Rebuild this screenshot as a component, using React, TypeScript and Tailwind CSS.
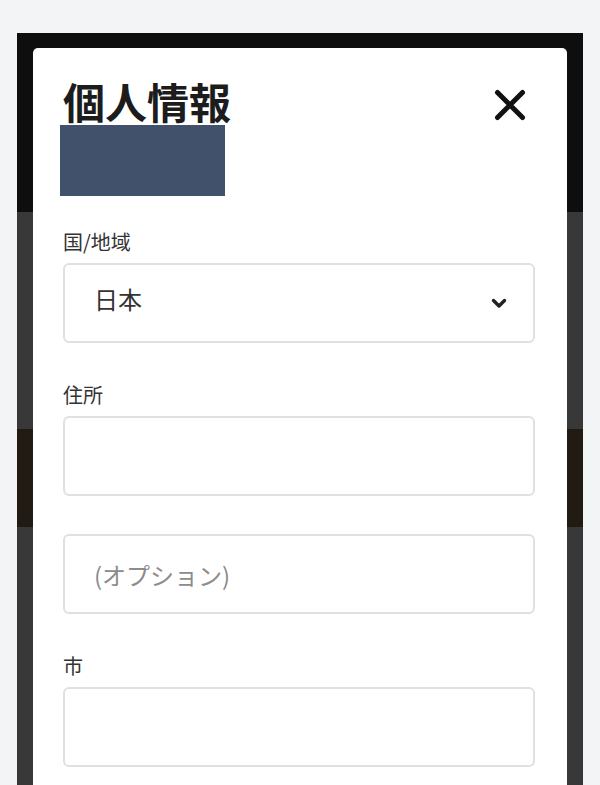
// 個人情報モーダル - 背景ページの上に重なるフォーム

function ChevronDown() {
  return (
    <svg width="16" height="11" viewBox="0 0 16 11" fill="none" aria-hidden="true">
      <path d="M2.5 2.5l5.5 5.5 5.5-5.5" stroke="#222" strokeWidth="3.4" strokeLinecap="round" strokeLinejoin="round" />
    </svg>
  );
}

function CloseIcon() {
  return (
    <svg width="34" height="34" viewBox="0 0 34 34" fill="none" aria-hidden="true">
      <path d="M4.5 4.5l25 25M29.5 4.5l-25 25" stroke="#111" strokeWidth="5" strokeLinecap="round" />
    </svg>
  );
}

function Field({ label, children }: { label?: string; children: React.ReactNode }) {
  return (
    <div className="flex flex-col">
      {label && <label className="mb-[7px] text-[20px] leading-[28px] text-[#333]">{label}</label>}
      {children}
    </div>
  );
}

const boxClass =
  'h-[80px] w-full rounded-[6px] border-2 border-[#e0e0e0] bg-white pl-[29px] pr-[26px] text-[24px] text-[#333] outline-none placeholder:text-[#8c8c8c]';

export default function App() {
  return (
    <div className="min-h-screen bg-[#f3f4f6] px-[17px] pt-[33px] font-['Noto_Sans_CJK_JP','Noto_Sans',sans-serif]">
      <div className="relative h-[752px] w-[566px] overflow-hidden">
        {/* 背景ページ（暗いオーバーレイ越し） */}
        <div className="h-[179px] bg-[#0e0e0e]" />
        <div className="h-[217px] bg-[#383838]" />
        <div className="h-[98px] bg-[#221b13]" />
        <div className="h-[258px] bg-[#383838]" />

        {/* モーダル本体 */}
        <div className="absolute top-[15px] right-4 bottom-0 left-4 rounded-t-[5px] bg-white pr-[32px] pl-[30px]">
          <div className="flex items-start justify-between pt-[29px]">
            <div>
              <h2 className="text-[42px] leading-[48px] font-bold text-[#1c1c1c]">個人情報</h2>
              <div className="ml-[-3px] h-[71px] w-[165px] bg-[#42516b]" />
            </div>
            <button className="mt-[11px] mr-[8px] flex items-center justify-center" aria-label="閉じる">
              <CloseIcon />
            </button>
          </div>

          <div className="mt-[32px] flex flex-col gap-[38px]">
            <Field label="国/地域">
              <div className={boxClass + ' flex items-center justify-between'}>
                <span className="-mt-[8px]">日本</span>
                <ChevronDown />
              </div>
            </Field>
            <Field label="住所">
              <input className={boxClass} />
            </Field>
            <Field>
              <input className={boxClass} placeholder="(オプション)" />
            </Field>
            <Field label="市">
              <input className={boxClass} />
            </Field>
          </div>
        </div>
      </div>
    </div>
  );
}
